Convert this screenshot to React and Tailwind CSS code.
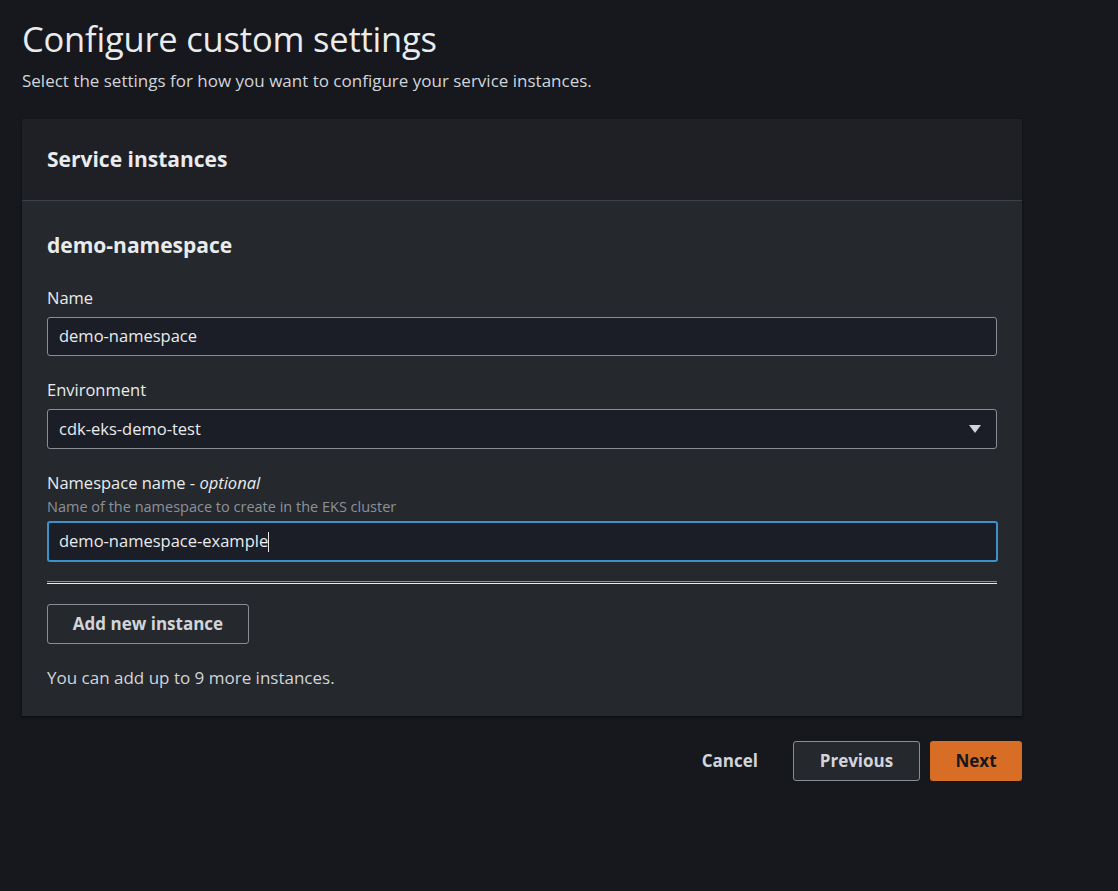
import React from "react";

export default function App() {
  const font = { fontFamily: '"Open Sans", "Noto Sans", sans-serif' };
  return (
    <div className="min-h-[891px] w-full bg-[#16181d] text-[#e9ebed]" style={font}>
      <div className="w-[1000px] ml-[22px] pt-[18px]">
        <h1 className="text-[34.5px] leading-[42px] font-normal tracking-[-0.2px]">Configure custom settings</h1>
        <p className="mt-[10px] text-[17px] leading-[22px] text-[#d1d5db]">Select the settings for how you want to configure your service instances.</p>

        <div className="mt-[27px] bg-[#25282d] shadow-[0_1px_2px_rgba(0,0,0,0.6)]">
          <div className="h-[82px] bg-[#1f2026] border-b border-[#3d4047] flex items-center px-[25px]">
            <h2 className="text-[21px] font-bold">Service instances</h2>
          </div>
          <div className="px-[25px] pt-[30px] pb-[27px]">
            <h3 className="text-[21px] font-bold leading-[28px]">demo-namespace</h3>

            <label className="block mt-[28px] text-[16.5px] leading-[22px]">Name</label>
            <div className="mt-[8px] h-[39px] w-[950px] bg-[#1b1e26] border border-[#8a8e94] rounded-[3px] flex items-center px-[11px] text-[16.5px]">demo-namespace</div>

            <label className="block mt-[23px] text-[16.5px] leading-[22px]">Environment</label>
            <div className="mt-[8px] h-[40px] w-[950px] bg-[#1b1e26] border border-[#8a8e94] rounded-[3px] flex items-center justify-between pl-[11px] pr-[14px] text-[16.5px]">
              <span>cdk-eks-demo-test</span>
              <svg width="14" height="10" viewBox="0 0 14 10"><path d="M1 1h12L7 9z" fill="#d1d5db" /></svg>
            </div>

            <label className="block mt-[23px] text-[16.5px] leading-[22px]">Namespace name - <i>optional</i></label>
            <div className="mt-[3px] text-[14.5px] leading-[20px] text-[#8d9299]">Name of the namespace to create in the EKS cluster</div>
            <div className="mt-[4px] h-[41px] w-[951px] bg-[#1b1e26] border-2 border-[#3a93c8] rounded-[3px] flex items-center px-[10px] text-[16.5px]">
              <span>demo-namespace-example</span>
              <span className="inline-block w-px h-[20px] bg-[#e9ebed]"></span>
            </div>

            <div className="mt-[19px] w-[950px] h-[3px] border-t border-[#8a8e94] border-b border-b-[#e9ebed]"></div>

            <button className="mt-[20px] h-[40px] w-[202px] border border-[#8a8e94] rounded-[3px] text-[17px] font-bold text-[#d1d5db]" style={font}>Add new instance</button>

            <p className="mt-[23px] text-[17px] leading-[22px] text-[#d1d5db]">You can add up to 9 more instances.</p>
          </div>
        </div>

        <div className="mt-[25px] flex justify-end items-center gap-[10px]">
          <button className="px-[25px] h-[40px] text-[17px] font-bold text-[#d1d5db]" style={font}>Cancel</button>
          <button className="w-[127px] h-[40px] border border-[#8a8e94] bg-[#25282d] rounded-[3px] text-[17px] font-bold text-[#d1d5db]" style={font}>Previous</button>
          <button className="w-[92px] h-[40px] bg-[#d86d25] rounded-[3px] text-[17px] font-bold text-[#16181d]" style={font}>Next</button>
        </div>
      </div>
    </div>
  );
}
